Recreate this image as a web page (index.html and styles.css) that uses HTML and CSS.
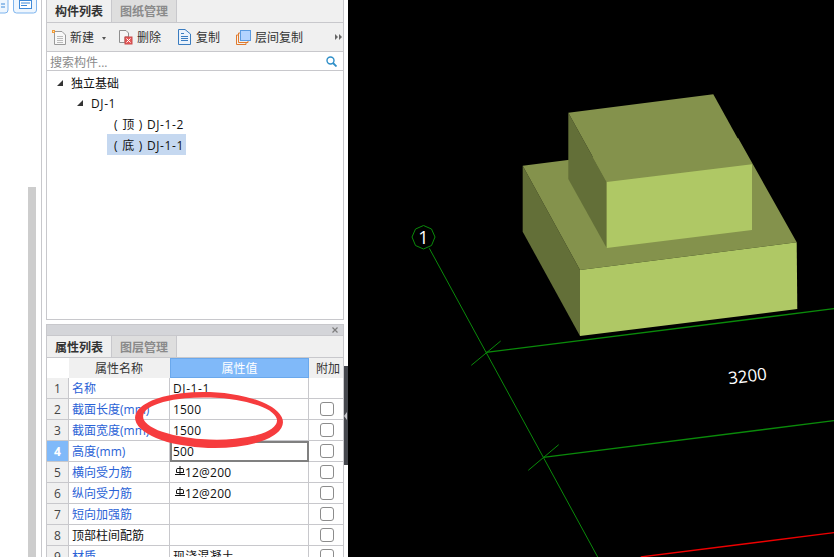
FILE: index.html
```html
<!DOCTYPE html>
<html lang="zh-CN">
<head>
<meta charset="utf-8">
<title>构件列表</title>
<link rel="stylesheet" href="styles.css">
</head>
<body>
<div class="app">
  <aside class="rail">
    <svg class="rail-icons" width="38" height="14" viewBox="0 0 38 14" aria-hidden="true">
      <rect x="-8" y="-4" width="16" height="17" rx="3" fill="#eef6fe" stroke="#7fb5ee"/>
      <path d="M1 4H5M1 7H5" stroke="#3f8ad8" fill="none"/>
      <rect x="13.500" y="-4" width="23" height="17" rx="3" fill="#eef6fe" stroke="#7fb5ee"/>
      <rect x="19.500" y="0.500" width="12" height="8" fill="#fff" stroke="#3f8ad8"/>
      <path d="M21 3H30M21 5.500H27" stroke="#3f8ad8" fill="none"/>
    </svg>
    <div class="rail-scroll"></div>
  </aside>

  <div class="panels">
    <section class="panel list-panel">
      <div class="tabs">
        <div class="tab active">构件列表</div>
        <div class="tab">图纸管理</div>
      </div>
      <div class="toolbar">
        <svg class="tool-icon new-icon" width="16" height="16" viewBox="0 0 16 16" aria-hidden="true">
          <path d="M3.500 2.500H11L14.500 6V15.500H3.500Z" fill="#f8f8f8" stroke="#9a9a9a"/>
          <path d="M6 7.500H12M6 9.500H12M6 11.500H12M6 13.500H12" stroke="#bbb"/>
          <path d="M1 1H4V4H1Z" fill="#f09a3a"/><path d="M2 2H3V3H2Z" fill="#ffe9a8"/>
        </svg>
        <span class="tool-label">新建</span>
        <span class="caret"></span>
        <svg class="tool-icon del-icon" width="15" height="16" viewBox="0 0 15 16" aria-hidden="true">
          <path d="M1.500 1.500H8L10.500 4V8H7V13.500H1.500Z" fill="#f6f6f6" stroke="#8f8f8f"/>
          <rect x="7" y="8" width="7" height="7" fill="#e65a5a" stroke="#c94a4a"/>
          <path d="M8.500 9.500L12.500 13.500M12.500 9.500L8.500 13.500" stroke="#fff"/>
        </svg>
        <span class="tool-label">删除</span>
        <svg class="tool-icon copy-icon" width="13" height="16" viewBox="0 0 13 16" aria-hidden="true">
          <path d="M0.500 0.500H7L12.500 5V15.500H0.500Z" fill="#eaf2fb" stroke="#3a7cc0"/>
          <path d="M3 7.500H10M3 9.500H10M3 11.500H10M3 4.500H6" stroke="#3a7cc0"/>
        </svg>
        <span class="tool-label">复制</span>
        <svg class="tool-icon layer-icon" width="15" height="15" viewBox="0 0 15 15" aria-hidden="true">
          <path d="M0.500 14.500V5H2M0.500 14.500H10V13" fill="none" stroke="#e07b2e"/>
          <path d="M2.500 12.500V3H4M2.500 12.500H12V11" fill="none" stroke="#e07b2e"/>
          <rect x="4.500" y="0.500" width="10" height="10" fill="#b3d3ff" stroke="#5a9ae0"/>
        </svg>
        <span class="tool-label">层间复制</span>
        <span class="more"><i></i><i></i></span>
      </div>
      <div class="search">
        <span class="search-text">搜索构件...</span>
        <svg class="search-icon" width="11" height="11" viewBox="0 0 11 11" aria-hidden="true">
          <circle cx="4.500" cy="4.500" r="3.500" fill="none" stroke="#2f8fc8" stroke-width="1.400"/>
          <path d="M7 7L10.500 10.500" stroke="#2f8fc8" stroke-width="1.800"/>
        </svg>
      </div>
      <div class="tree">
        <div class="node lvl0"><span class="twist"></span><span>独立基础</span></div>
        <div class="node lvl1"><span class="twist"></span><span class="code">DJ-1</span></div>
        <div class="node lvl2"><span class="leaf">( 顶 ) <span class="code">DJ-1-2</span></span></div>
        <div class="node lvl2"><span class="leaf selected">( 底 ) <span class="code">DJ-1-1</span></span></div>
      </div>
    </section>

    <section class="panel props-panel">
      <div class="titlebar">
        <svg class="close" width="6" height="6" viewBox="0 0 6 6" role="img" aria-label="关闭"><path d="M0.500 0.500L5.500 5.500M5.500 0.500L0.500 5.500" stroke="#7d7d7d" stroke-width="1.200"/></svg>
      </div>
      <div class="tabs props-tabs">
        <div class="tab active">属性列表</div>
        <div class="tab">图层管理</div>
      </div>
      <div class="grid">
        <div class="cell corner"></div>
        <div class="cell head">属性名称</div>
        <div class="cell head head-on">属性值</div>
        <div class="cell head head-extra">附加</div>

        <div class="cell num">1</div><div class="cell name">名称</div><div class="cell val"><span class="code">DJ-1-1</span></div><div class="cell chk"></div>
        <div class="cell num">2</div><div class="cell name">截面长度(mm)</div><div class="cell val">1500</div><div class="cell chk"><span class="box"></span></div>
        <div class="cell num">3</div><div class="cell name">截面宽度(mm)</div><div class="cell val">1500</div><div class="cell chk"><span class="box"></span></div>
        <div class="cell num num-on">4</div><div class="cell name">高度(mm)</div><div class="cell val current">500</div><div class="cell chk"><span class="box"></span></div>
        <div class="cell num">5</div><div class="cell name">横向受力筋</div><div class="cell val"><svg class="bar-sym" width="10" height="10" viewBox="0 0 10 10" aria-hidden="true"><path d="M1.500 6.500V3.500Q1.500 2.500 3 2.500H7Q8.500 2.500 8.500 3.500V6.500H1.500M5 0V9M0 8.500H10" fill="none" stroke="#111"/></svg>12@200</div><div class="cell chk"><span class="box"></span></div>
        <div class="cell num">6</div><div class="cell name">纵向受力筋</div><div class="cell val"><svg class="bar-sym" width="10" height="10" viewBox="0 0 10 10" aria-hidden="true"><path d="M1.500 6.500V3.500Q1.500 2.500 3 2.500H7Q8.500 2.500 8.500 3.500V6.500H1.500M5 0V9M0 8.500H10" fill="none" stroke="#111"/></svg>12@200</div><div class="cell chk"><span class="box"></span></div>
        <div class="cell num">7</div><div class="cell name">短向加强筋</div><div class="cell val"></div><div class="cell chk"><span class="box"></span></div>
        <div class="cell num">8</div><div class="cell name black">顶部柱间配筋</div><div class="cell val"></div><div class="cell chk"><span class="box"></span></div>
        <div class="cell num">9</div><div class="cell name">材质</div><div class="cell val">现浇混凝土</div><div class="cell chk"><span class="box"></span></div>
      </div>
    </section>
  </div>

  <div class="gutter"><div class="gutter-strip"><span class="gutter-arrow"></span></div></div>

  <svg class="canvas" width="486" height="557" viewBox="348 0 486 557" role="img" aria-label="独立基础三维视图">
    <rect x="348" y="0" width="486" height="557" fill="#000"/>
    <g stroke="#0a8a0a" stroke-width="1" fill="none">
      <polygon points="423.500,225.500 431.500,229 435,237 431.500,245.500 423.500,249 415.500,245.500 412,237 415.500,229"/>
      <path d="M429.300 248.300L597.700 557"/>
      <path d="M471.300 365.300L500.700 341M528.300 470.300L558.700 444.700"/>
      <path d="M486 352.300L834 308.700M543.300 457.300L834 420.700" stroke-width="1.300"/>
    </g>
    <path d="M640.700 557L834 532.700" stroke="#ee0000" stroke-width="1.300" fill="none"/>
    <g>
      <polygon class="f-side" points="522.700,165.700 580,270 580,336 522.700,231.700"/>
      <polygon class="f-top" points="522.700,165.700 738.300,138.300 796.700,242.300 580,270"/>
      <polygon class="f-front" points="580,270 796.700,242.300 797.300,309 580,336"/>
      <polygon class="f-side" points="568.300,112.700 606.700,182 606.700,248 568.300,179"/>
      <polygon class="f-top" points="568.300,112.700 713.300,94.300 752,164.300 606.700,182"/>
      <polygon class="f-front" points="606.700,182 752,164.300 752,230 606.700,248"/>
    </g>
    <text class="cad-text cad-axis" x="423.500" y="244" text-anchor="middle">1</text>
    <text class="cad-text" x="747.500" y="382" text-anchor="middle" transform="rotate(-7 747.500 376)">3200</text>
  </svg>

  <svg class="marker" width="160" height="70" viewBox="130 385 160 70" aria-hidden="true">
    <path transform="rotate(2 209 420)" fill="#f63c3e" fill-rule="evenodd" d="M135 420A74 28 0 1 0 283 420A74 28 0 1 0 135 420ZM143 418.500A67 21 0 1 0 277 418.500A67 21 0 1 0 143 418.500Z"/>
  </svg>
</div>
</body>
</html>
```
FILE: styles.css
```css
* { box-sizing: border-box; }
html, body { margin: 0; padding: 0; height: 100%; overflow: hidden; background: #fff; }
body { font: 12px/1 "Open Sans", "Noto Sans CJK SC", sans-serif; color: #111; }

.app { position: relative; display: flex; width: 834px; height: 557px; overflow: hidden; }

.rail { width: 46px; flex: none; display: flex; flex-direction: column; background: linear-gradient(#c8c8cc, #c8c8cc) 41px 0 / 1px 100% no-repeat; }
.rail-icons { display: block; flex: none; }
.rail-scroll { width: 8px; margin: 173px 0 0 28px; flex: 1; background: #cdcdcd; }

.panels { width: 298px; flex: none; display: flex; flex-direction: column; height: 557px; }
.panel { border: 1px solid #c8c8cc; background: #fff; }
.list-panel { height: 320px; border-top: 0; flex: none; }
.props-panel { margin-top: 4px; flex: 1; border-bottom: 0; overflow: hidden; }

.tabs { display: flex; height: 23px; background: #f0f0f0; border-bottom: 1px solid #c8c8cc; }
.props-tabs { height: 22px; }
.tab { width: 65px; display: flex; align-items: center; justify-content: center; padding-top: 2px; border-right: 1px solid #c8c8cc; background: #dedede; color: #8a8a8a; font-weight: 700; }
.tab.active { background: #f0f0f0; color: #333; }

.toolbar { height: 29px; display: flex; align-items: center; background: #f0f0f0; border-bottom: 1px solid #c8c8cc; padding-left: 4px; }
.tool-label { color: #333; padding-top: 2px; }
.new-icon { margin-right: 3px; }
.caret { width: 0; height: 0; margin: 2px 0 0 8px; border: 2.500px solid transparent; border-top: 3px solid #555; border-bottom: 0; }
.del-icon { margin: 0 4px 0 12px; }
.copy-icon { margin: 0 5px 0 17px; }
.layer-icon { margin: 0 4px 0 16px; }
.more { display: flex; gap: 1px; margin-left: auto; margin-right: 1px; }
.more i { width: 0; height: 0; border: 3px solid transparent; border-left: 3px solid #666; border-right: 0; }

.search { height: 19px; display: flex; align-items: center; justify-content: space-between; padding: 0 6px 0 3px; border-bottom: 1px solid #c8c8cc; }
.search-text { color: #8a8a8a; padding-top: 3px; }

.node { height: 21px; display: flex; align-items: center; color: #111; }
.lvl0 { padding: 4px 0 0 10px; }
.lvl1 { padding: 2px 0 0 30px; }
.lvl2 { padding-left: 60px; }
.twist { width: 0; height: 0; margin: -2px 8px 0 0; border-style: solid; border-width: 0 0 6px 6px; border-color: transparent transparent #333 transparent; }
.leaf { height: 21px; display: flex; align-items: center; padding: 2px 2px 0 7px; white-space: pre; word-spacing: 1.500px; }
.code { letter-spacing: 0.600px; }
.selected { background: #c5d8f0; }

.titlebar { height: 11px; background: #d4d5d9; border-bottom: 1px solid #c8c8cc; display: flex; justify-content: flex-end; align-items: center; padding-right: 5px; }
.close { display: block; }

.grid { display: grid; grid-template-columns: 22px 101px 139px 34px; grid-template-rows: 20px repeat(9, 21px); }
.cell { border-right: 1px solid #c8c8cc; border-bottom: 1px solid #c8c8cc; display: flex; align-items: center; padding-top: 2px; white-space: nowrap; overflow: hidden; }
.corner { border: 0; background: #fff; }
.head { justify-content: center; background: #f0f0f0; color: #333; border-color: #f0f0f0; }
.head-on { background: #80b9f9; color: #fff; border: 1px solid #6aa8ec; }
.head-extra { padding-left: 4px; border-right: 0; }
.num { justify-content: center; background: #f0f0f0; color: #444; }
.num-on { background: #80b9f9; color: #fff; font-weight: 700; }
.name { padding-left: 3px; color: #2a62d6; }
.black { color: #111; }
.val { padding-left: 3px; color: #111; letter-spacing: 0.200px; }
.current { border: 2px solid #808080; padding: 0 0 0 1px; }
.bar-sym { margin: -5px 0 0 2px; flex: none; }
.chk { justify-content: center; border-right: 0; padding: 0 0 0 2px; }
.box { width: 14px; height: 14px; border: 1px solid #8c8c8c; border-radius: 3px; background: #fff; }

.gutter { width: 4px; flex: none; padding-top: 366px; }
.gutter-strip { height: 99px; background: #45474d; display: flex; align-items: center; }
.gutter-arrow { width: 0; height: 0; border: 4px solid transparent; border-right: 3px solid #c8c8cc; border-left: 0; }

.canvas { display: block; flex: none; }
.f-top { fill: #84924c; }
.f-front { fill: #afc865; }
.f-side { fill: #636f38; }
.cad-text { fill: #fff; font-family: "Open Sans", sans-serif; font-size: 17px; }
.cad-axis { font-size: 18px; }

.marker { position: absolute; left: 130px; top: 385px; pointer-events: none; }
```
